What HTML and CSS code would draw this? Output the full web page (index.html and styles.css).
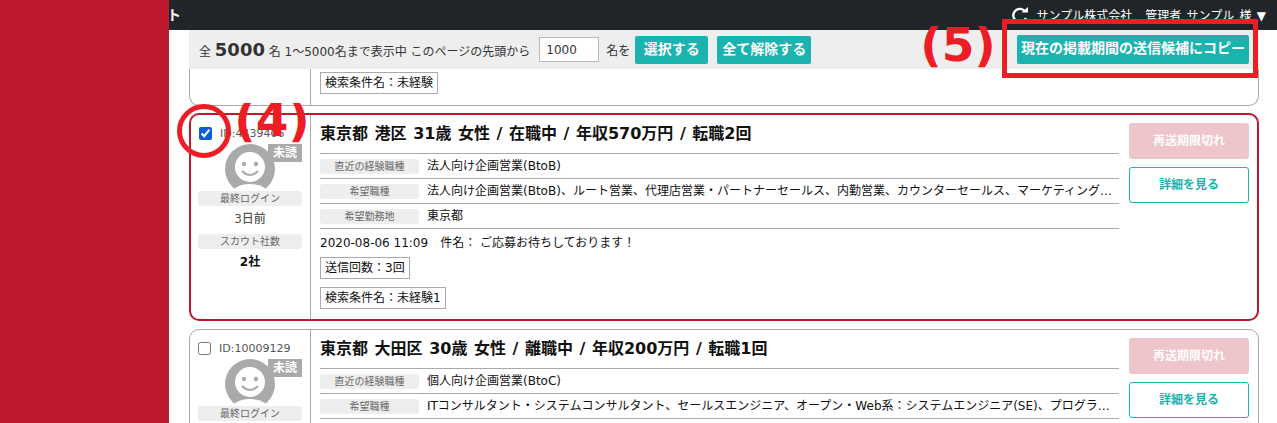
FILE: index.html
```html
<!DOCTYPE html>
<html lang="ja">
<head>
    <meta charset="utf-8">
    <title>スカウト</title>
    <link rel="stylesheet" href="styles.css">
</head>
<body>
<div class="sidebar"></div>
<div class="main">
    <div class="topbar">
        <span class="brand">ト</span>
        <div class="userNav">
            <svg class="reload" width="18" height="16" viewBox="0 0 18 16"><path d="M14.2 4.6A6.6 6.6 0 1 0 15 11" fill="none" stroke="#fff" stroke-width="2.4"/><path d="M10.5 5.6h6.5V0z" fill="#fff"/></svg>
            <span class="company">サンプル株式会社</span>
            <span class="userName">管理者 サンプル 様 ▼</span>
        </div>
    </div>

    <div class="content">
        <div class="toolbar">
            <span class="count">全 <b>5000</b> 名 1～5000名まで表示中 このページの先頭から</span>
            <input class="startNo" type="text" value="1000">
            <span class="count">名を</span>
            <a class="btn">選択する</a>
            <a class="btn btnGap">全て解除する</a>
            <a class="btn btnCopy">現在の掲載期間の送信候補にコピー</a>
        </div>

        <div class="card cardCut">
            <div class="side"></div>
            <div class="body"><span class="tag">検索条件名：未経験</span></div>
        </div>

        <div class="card cardOn">
            <div class="side">
                <label class="idLine"><input type="checkbox" checked> ID:4439406</label>
                <div class="photo">
                    <svg width="50" height="47" viewBox="0 0 50 47"><circle cx="25" cy="25" r="25" fill="#aaa"/><circle cx="25" cy="23" r="15" fill="#fff"/><ellipse cx="25" cy="51" rx="19" ry="11" fill="#fff"/><circle cx="19" cy="20" r="2.2" fill="#aaa"/><circle cx="31" cy="20" r="2.2" fill="#aaa"/><path d="M17 27q8 8 16 0" fill="none" stroke="#aaa" stroke-width="2"/></svg>
                    <span class="unread">未読</span>
                </div>
                <div class="sideLabel">最終ログイン</div>
                <div class="sideValue">3日前</div>
                <div class="sideLabel">スカウト社数</div>
                <div class="sideValue sideStrong">2社</div>
            </div>
            <div class="body">
                <h3>東京都 港区 31歳 女性 / 在職中 / 年収570万円 / 転職2回</h3>
                <div class="row"><span class="rowLabel">直近の経験職種</span><span class="rowValue">法人向け企画営業(BtoB)</span></div>
                <div class="row"><span class="rowLabel">希望職種</span><span class="rowValue">法人向け企画営業(BtoB)、ルート営業、代理店営業・パートナーセールス、内勤営業、カウンターセールス、マーケティング・広報・宣伝、商品企画</span></div>
                <div class="row"><span class="rowLabel">希望勤務地</span><span class="rowValue">東京都</span></div>
                <div class="row rowLast">2020-08-06 11:09　件名： ご応募お待ちしております！</div>
                <div><span class="tag">送信回数：3回</span></div>
                <div><span class="tag">検索条件名：未経験1</span></div>
            </div>
            <div class="actions">
                <a class="action actionOff">再送期限切れ</a>
                <a class="action actionLine">詳細を見る</a>
            </div>
        </div>

        <div class="card">
            <div class="side">
                <label class="idLine"><input type="checkbox"> ID:10009129</label>
                <div class="photo">
                    <svg width="50" height="47" viewBox="0 0 50 47"><circle cx="25" cy="25" r="25" fill="#aaa"/><circle cx="25" cy="23" r="15" fill="#fff"/><ellipse cx="25" cy="51" rx="19" ry="11" fill="#fff"/><circle cx="19" cy="20" r="2.2" fill="#aaa"/><circle cx="31" cy="20" r="2.2" fill="#aaa"/><path d="M17 27q8 8 16 0" fill="none" stroke="#aaa" stroke-width="2"/></svg>
                    <span class="unread">未読</span>
                </div>
                <div class="sideLabel">最終ログイン</div>
            </div>
            <div class="body">
                <h3>東京都 大田区 30歳 女性 / 離職中 / 年収200万円 / 転職1回</h3>
                <div class="row"><span class="rowLabel">直近の経験職種</span><span class="rowValue">個人向け企画営業(BtoC)</span></div>
                <div class="row"><span class="rowLabel">希望職種</span><span class="rowValue">ITコンサルタント・システムコンサルタント、セールスエンジニア、オープン・Web系：システムエンジニア(SE)、プログラマー、インフラエンジニア</span></div>
                <div class="row"><span class="rowLabel">希望勤務地</span><span class="rowValue">東京都</span></div>
            </div>
            <div class="actions">
                <a class="action actionOff">再送期限切れ</a>
                <a class="action actionLine">詳細を見る</a>
            </div>
        </div>
    </div>
</div>

<!-- notes drawn over the screenshot -->
<div class="note noteFour">(4)</div>
<div class="note noteFive">(5)</div>
<div class="markCircle"></div>
<div class="markBox"></div>
</body>
</html>
```

FILE: styles.css
```css
* { box-sizing: border-box; }
html, body { height: 100%; }
body {
    margin: 0;
    display: flex;
    overflow: hidden;
    font-family: "DejaVu Sans", "Noto Sans CJK JP", sans-serif;
    font-size: 12px;
    color: #212529;
    background: #fff;
}
.sidebar { width: 169px; flex: none; background: #be1a2d; position: relative; z-index: 1; }
.main { flex: 1; min-width: 0; }

.topbar {
    height: 30px;
    background: #212529;
    color: #fff;
    display: flex;
    justify-content: space-between;
    padding: 0 11px 0 0;
    font-size: 12px;
}
.brand { font-size: 14px; line-height: 30px; margin-left: -2px; font-weight: bold; }
.userNav { display: flex; align-items: center; height: 30px; padding-bottom: 1px; }
.reload { margin-right: 8px; }
.company { margin-right: 13px; }
.userName { word-spacing: 1.5px; }

.content { padding: 0 18px 0 20px; }

.toolbar {
    height: 39px;
    background: #eee;
    display: flex;
    align-items: center;
    padding: 0 10px;
}
.count { font-size: 12px; color: #333; white-space: nowrap; }
.count b { font-size: 18px; }
.startNo {
    width: 60px;
    height: 25px;
    margin: 0 7px 0 9px;
    padding: 0 6px;
    border: 1px solid #bbb;
    font-family: inherit;
    font-size: 12px;
    color: #333;
}
.btn {
    height: 28px;
    line-height: 26px;
    margin-left: 5px;
    padding: 0 8.5px;
    background: #1ab3b0;
    border-radius: 2px;
    color: #fff;
    font-size: 14px;
    font-weight: bold;
    white-space: nowrap;
}
.btnGap { margin-left: 9px; padding: 0 5px; }
.btnCopy { margin-left: auto; height: 29px; padding: 0; width: 232px; text-align: center; }

.card {
    display: flex;
    border: 1px solid #aaa;
    border-radius: 10px;
    margin-bottom: 8px;
    height: 208px;
    background: #fff;
}
.cardCut { height: 37px; margin-bottom: 7px; border-top: 0; border-radius: 0 0 10px 10px; }
.cardCut .body { padding-top: 3px; }
.cardOn { border: 2px solid #c3172e; }
.cardOn .side { width: 120px; padding-left: 7px; }
.cardOn .idLine { margin-left: 1px; }
.cardOn .actions { width: 138px; padding-right: 8px; }

.side { width: 121px; flex: none; border-right: 1px solid #aaa; padding: 8px 8px 0; }
.idLine { display: flex; align-items: center; height: 20px; font-size: 11px; color: #555; white-space: nowrap; }
.idLine input { width: 13px; height: 13px; margin: 0 8px 0 0; flex: none; accent-color: #0b5ed7; }
.photo { position: relative; height: 47px; margin-top: 1px; text-align: center; }
.unread {
    position: absolute;
    top: 0;
    right: 0;
    width: 34px;
    height: 18px;
    background: #aaa;
    color: #fff;
    font-size: 12px;
    font-weight: bold;
    line-height: 18px;
    text-align: center;
}
.sideLabel {
    height: 15px;
    line-height: 15px;
    background: #eee;
    border-radius: 3px;
    color: #666;
    font-size: 10px;
    text-align: center;
}
.sideValue { height: 28px; line-height: 27px; text-align: center; font-size: 12px; font-weight: 500; color: #555; }
.sideStrong { color: #111; font-weight: bold; }

.body { flex: 1; min-width: 0; padding: 8px 0 0 9px; }
.body h3 { margin: 0; height: 30px; font-size: 16px; line-height: 22px; word-spacing: 1px; color: #111; white-space: nowrap; }
.row {
    display: flex;
    align-items: center;
    height: 25px;
    border-top: 1px solid #aaa;
    font-size: 12px;
    color: #111;
}
.rowLast { height: 29px; padding-bottom: 4px; white-space: nowrap; }
.rowLabel {
    width: 99px;
    height: 15px;
    line-height: 15px;
    flex: none;
    background: #eee;
    border-radius: 3px;
    color: #666;
    font-size: 10px;
    text-align: center;
}
.rowValue { margin-left: 8px; padding-bottom: 3px; white-space: nowrap; overflow: hidden; text-overflow: ellipsis; }
.tag {
    display: inline-block;
    height: 22px;
    line-height: 20px;
    margin-bottom: 8px;
    padding: 0 4px;
    border: 1px solid #aaa;
    font-size: 12px;
    color: #111;
    white-space: nowrap;
}

.actions { width: 139px; flex: none; padding: 8px 9px 0 10px; }
.action {
    display: block;
    height: 36px;
    line-height: 34px;
    margin-bottom: 8px;
    border-radius: 3px;
    border: 1px solid transparent;
    font-size: 12px;
    font-weight: bold;
    text-align: center;
}
.actionOff { background: #eec5cb; color: #fff; }
.actionLine { border-color: #1ab3b0; color: #1ab3b0; }

.note {
    position: absolute;
    z-index: 2;
    overflow: hidden;
    color: #ee1c25;
    font-family: "DejaVu Sans", sans-serif;
    font-size: 47px;
    font-weight: bold;
    text-align: center;
    white-space: nowrap;
}
.noteFour { left: 232px; top: 103px; width: 80px; height: 48px; line-height: 34px; }
.noteFive { left: 918px; top: 22px; width: 80px; height: 49px; line-height: 46px; }
.markCircle {
    position: absolute;
    z-index: 2;
    left: 177px;
    top: 104px;
    width: 54px;
    height: 54px;
    border: 5px solid #ee1c25;
    border-radius: 50%;
}
.markBox {
    position: absolute;
    z-index: 2;
    left: 1002px;
    top: 19px;
    width: 256px;
    height: 59px;
    border: 5px solid #ee1c25;
}
```
